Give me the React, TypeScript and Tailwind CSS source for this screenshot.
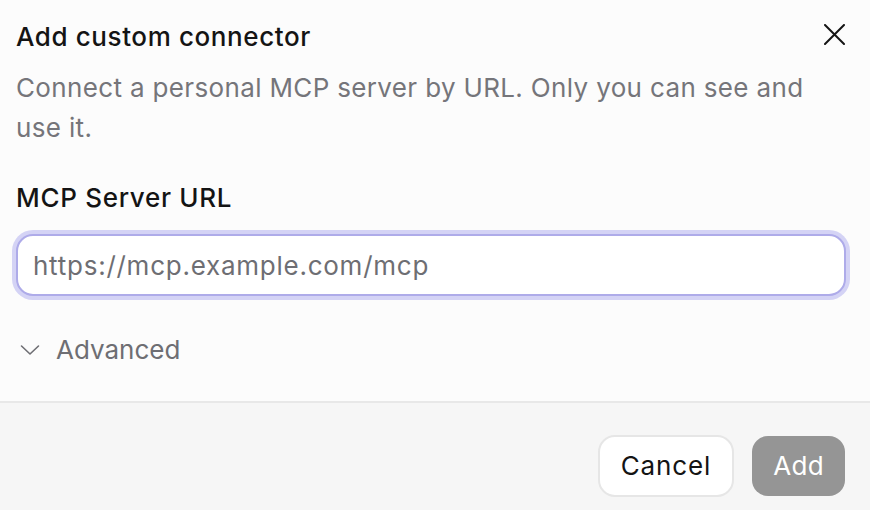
import React from 'react';

const App: React.FC = () => {
    return (
        <div className="w-[870px] h-[510px] flex flex-col bg-[#fcfcfc] overflow-hidden" style={{ fontFamily: 'Inter, "Noto Sans", sans-serif' }}>
            <div className="flex-1 flex flex-col px-4 pt-[20px]">
                <div className="flex items-start justify-between">
                    <h2 className="text-[26px] leading-[34px] font-medium text-[#141414] tracking-[0.6px]">Add custom connector</h2>
                    <button className="mt-[4px] mr-[9px] text-[#141414]">
                        <svg width="21" height="21" viewBox="0 0 21 21" fill="none" stroke="currentColor" strokeWidth="2" strokeLinecap="round">
                            <path d="M1 1 L20 20 M20 1 L1 20" />
                        </svg>
                    </button>
                </div>
                <p className="mt-[14px] text-[26px] leading-[40px] text-[#75757a] tracking-[0.35px] pr-[40px]">
                    Connect a personal MCP server by URL. Only you can see and use it.
                </p>
                <label className="mt-[33px] text-[26px] leading-[34px] font-medium text-[#141414] tracking-[0.7px]">MCP Server URL</label>
                <div className="mt-[19px] mr-[8px] rounded-[17px] ring-4 ring-[#d4d3f5] border-2 border-[#aeabe9] bg-white h-[62px] flex items-center px-[15px]">
                    <span className="text-[26px] text-[#6e6e73] tracking-[0.75px]">https://mcp.example.com/mcp</span>
                </div>
                <div className="mt-[37px] flex items-center gap-[16px] pl-[4px]">
                    <svg width="20" height="12" viewBox="0 0 20 12" fill="none" stroke="#6e6e73" strokeWidth="1.6" strokeLinecap="round" strokeLinejoin="round">
                        <path d="M1.5 2 L10 10 L18.5 2" />
                    </svg>
                    <span className="text-[26px] leading-[34px] text-[#6e6e73]">Advanced</span>
                </div>
            </div>
            <div className="h-[109px] border-t-2 border-[#e8e8e8] bg-[#f6f6f6] flex items-center justify-end gap-[18px] pr-[25px] pt-[18px]">
                <button className="h-[62px] px-[21px] rounded-[17px] border-2 border-[#e6e6e6] bg-white text-[26px] text-[#141414] tracking-[0.9px]">Cancel</button>
                <button className="h-[60px] px-[21px] rounded-[16px] bg-[#959595] text-[26px] text-white tracking-[0.3px]">Add</button>
            </div>
        </div>
    );
};

export default App;
